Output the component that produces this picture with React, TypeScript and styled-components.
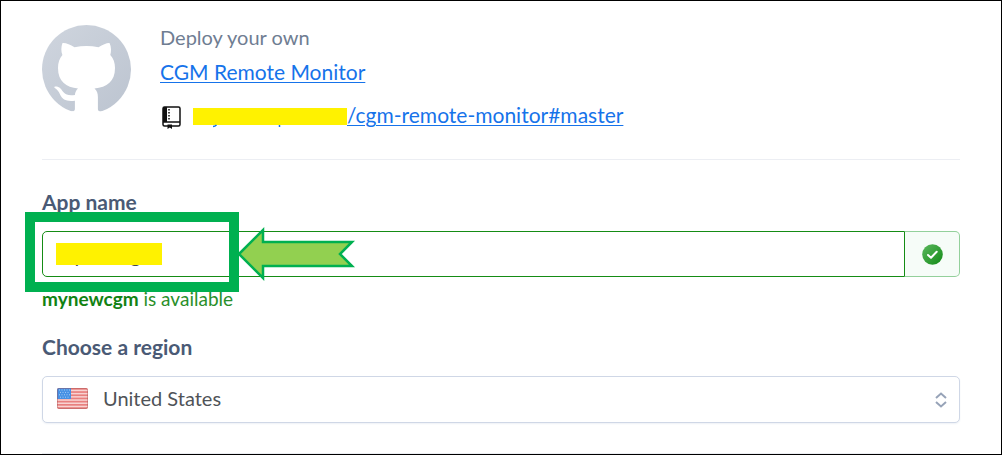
import React from "react";
import styled, { createGlobalStyle } from "styled-components";

const GlobalStyle = createGlobalStyle`
  *, *::before, *::after { box-sizing: border-box; }
  body {
    margin: 0;
    background: #fff;
    color: #596981;
    font-family: Lato, "Open Sans", sans-serif;
    font-size: 20px;
    line-height: 24px;
  }
`;

const Frame = styled.main`
  min-height: 100vh;
  border: 1px solid #000;
  padding: 24px 41px 0;
`;

const Header = styled.header`
  display: flex;
  gap: 29px;
  padding-bottom: 30px;
  border-bottom: 1px solid #eceef3;
`;

const HeaderText = styled.div`
  display: flex;
  flex-direction: column;
  align-items: flex-start;
`;

const Lead = styled.p`
  margin: 0 0 11px;
  color: #6f7d92;
`;

const Link = styled.a`
  font-size: 21px;
  color: #1673ea;
  text-decoration: underline;
  text-decoration-thickness: 1px;
  text-underline-offset: 2px;
`;

const Repo = styled.div`
  display: flex;
  align-items: center;
  margin-top: 16px;
  gap: 12px;

  & > svg { margin: 6px 0 0 2px; }
`;

const RepoLink = styled.div`
  display: flex;
  align-items: center;
`;

const Mask = styled.span<{ $width: number; $height: number }>`
  display: block;
  width: ${(p) => p.$width}px;
  height: ${(p) => p.$height}px;
  background: #fff200;
`;

const Label = styled.label`
  display: block;
  font-size: 21px;
  font-weight: 700;
  color: #4a5a75;
`;

const Field = styled.section<{ $gap: number }>`
  margin-top: ${(p) => p.$gap}px;
`;

const InputGroup = styled.div`
  position: relative;
  display: flex;
  height: 46px;
  margin-top: 17px;
`;

const TextInput = styled.input`
  flex: 1;
  min-width: 0;
  padding: 2px 14px 0;
  border: 1px solid #158c15;
  border-radius: 5px 0 0 5px;
  background: #fff;
  color: #3f4654;
  font: inherit;
  outline: none;
`;

const Status = styled.span`
  display: flex;
  align-items: center;
  justify-content: center;
  width: 55px;
  border: 1px solid #93d09b;
  border-left: 0;
  border-radius: 0 5px 5px 0;
  background: #f6fcf8;
`;

const InputMask = styled.div`
  position: absolute;
  left: 14px;
  top: 12px;
`;

const Highlight = styled.div`
  position: absolute;
  left: -17px;
  top: -19px;
  width: 214px;
  height: 80px;
  border: 10px solid #00b050;
  pointer-events: none;
`;

const Pointer = styled.svg`
  position: absolute;
  left: 194px;
  top: -8px;
  pointer-events: none;
`;

const Hint = styled.p`
  margin: 10px 0 0;
  font-size: 19px;
  color: #2a8f2a;

  strong { color: #128212; font-weight: 700; }
`;

const SelectBox = styled.div`
  position: relative;
  margin-top: 17px;
`;

const Select = styled.select`
  appearance: none;
  display: block;
  width: 100%;
  height: 47px;
  padding: 0 48px 3px 60px;
  border: 1px solid #cfd7e6;
  border-radius: 5px;
  background: #fff;
  box-shadow: 0 1px 2px #eef1f6;
  color: #4f5358;
  font: inherit;
`;

const Flag = styled.svg`
  position: absolute;
  left: 15px;
  top: 12px;
  pointer-events: none;
`;

const Chevrons = styled.svg`
  position: absolute;
  right: 13px;
  top: 16px;
  pointer-events: none;
`;

const Divider = styled.hr`
  margin: 30px 0 0;
  border: 0;
  border-top: 1px solid #eceef3;
`;

const GitHubMark = () => (
  <svg width="89" height="89" viewBox="0 0 89 89" role="img" aria-label="GitHub">
    <defs>
      <linearGradient id="mark" x1="0" y1="0" x2="1" y2="1">
        <stop offset="0" stopColor="#cfd5de" />
        <stop offset="1" stopColor="#bcc4d0" />
      </linearGradient>
    </defs>
    <circle cx="44.5" cy="44.5" r="44.5" fill="url(#mark)" />
    <path
      fill="#fff"
      d="M20.5 18C24 17.700 28 19.500 32.500 22.300Q44.500 19.600 56.500 22.300C61 19.500 65 17.700 67.500 18C69.500 22 69.300 26.500 68.300 30C71.500 33.500 73 37.500 73 43C73 56.500 65 62.300 52.500 63.400C55 65.500 55.900 68.500 55.900 72V84Q55.900 86.300 58.500 86.300V89H30V86.300Q32.900 86.300 32.900 84V75.700C24.500 76.800 20.500 74.500 18.300 70C16.500 66 15 64.300 12.500 62.800C11.300 61.500 15.500 60.700 18.500 63.500C21.500 66.500 22 71.500 32.900 70C33 67.500 34.200 65 36 63.400C24 62.300 16 56.500 16 43C16 37.500 17.500 33.500 20.400 30C19 26.500 19 22 20.500 18Z"
    />
  </svg>
);

const RepoIcon = () => (
  <svg width="19" height="23" viewBox="0 0 19 23" aria-hidden="true">
    <rect x="1" y="1" width="17" height="19" rx="1.500" fill="#fff" stroke="#111" strokeWidth="1.500" />
    <path d="M1 1H5V16H1Z" fill="#111" />
    <path d="M1 16H18" stroke="#111" strokeWidth="1.500" />
    <path d="M7 3V14" stroke="#111" strokeWidth="1.500" strokeDasharray="1.500 1.500" />
    <path d="M5.500 18.500H10V23L7.800 21.500L5.500 23Z" fill="#111" />
  </svg>
);

const RepoOwner = styled.svg`
  display: block;
  margin-top: 6px;
`;

/* Redacted owner name, with the tips of two descenders showing under the bar. */
const MaskedOwner = () => (
  <RepoOwner width="154" height="20" viewBox="0 0 154 20" role="img" aria-label="Hidden owner">
    <rect width="154" height="17" fill="#fff200" />
    <path d="M20 18.500Q22 18.500 23.500 17M86.500 17V19" fill="none" stroke="#1673ea" strokeWidth="1.500" />
  </RepoOwner>
);

const CheckIcon = () => (
  <svg width="21" height="21" viewBox="0 0 21 21" role="img" aria-label="Available">
    <defs>
      <linearGradient id="ok" x1="0" y1="0" x2="1" y2="1">
        <stop offset="0" stopColor="#5cb85f" />
        <stop offset="1" stopColor="#128a16" />
      </linearGradient>
    </defs>
    <circle cx="10.500" cy="10.500" r="10.300" fill="url(#ok)" />
    <path d="M6 11L9 13.700L14.700 7.700" fill="none" stroke="#fff" strokeWidth="2" strokeLinecap="round" strokeLinejoin="round" />
  </svg>
);

const UsFlag = () => (
  <Flag width="31" height="21" viewBox="0 0 31 21" aria-hidden="true">
    <defs>
      <clipPath id="flagShape"><rect width="31" height="21" rx="2" /></clipPath>
    </defs>
    <g clipPath="url(#flagShape)">
      <rect width="31" height="21" fill="#f8d3d2" />
      {[0, 1, 2, 3, 4, 5, 6].map((i) => (
        <rect key={i} y={i * 3.2} width="31" height="1.700" fill="#e8807f" />
      ))}
      <rect width="14" height="11" fill="#4690e4" />
      {[0, 1, 2, 3].map((r) => (
        <path key={r} d={`M${r % 2 ? 3 : 2} ${2 + r * 2.4}H13`} stroke="#a9cdf5" strokeWidth="1" strokeDasharray="1 1.500" />
      ))}
      <rect x="0.500" y="0.500" width="30" height="20" rx="1.500" fill="none" stroke="#a04a4a" strokeOpacity="0.400" />
    </g>
  </Flag>
);

export default function App() {
  return (
    <>
      <GlobalStyle />
      <Frame>
        <Header>
          <GitHubMark />
          <HeaderText>
            <Lead>Deploy your own</Lead>
            <Link href="#app">CGM Remote Monitor</Link>
            <Repo>
              <RepoIcon />
              <RepoLink>
                <MaskedOwner />
                <Link href="#repo">/cgm-remote-monitor#master</Link>
              </RepoLink>
            </Repo>
          </HeaderText>
        </Header>

        <Field $gap={30}>
          <Label htmlFor="app-name">App name</Label>
          <InputGroup>
            <TextInput id="app-name" defaultValue="mynewcgm" aria-describedby="app-hint" />
            <Status><CheckIcon /></Status>
            <InputMask><Mask $width={106} $height={22} /></InputMask>
            <Pointer width="120" height="60" viewBox="0 0 120 60" aria-hidden="true">
              <path
                d="M3 31L27 7V19H116L104 31L116 43H27V55Z"
                fill="#92d050"
                stroke="#00b050"
                strokeWidth="2.500"
              />
            </Pointer>
            <Highlight />
          </InputGroup>
          <Hint id="app-hint"><strong>mynewcgm</strong> is available</Hint>
        </Field>

        <Field $gap={24}>
          <Label htmlFor="region">Choose a region</Label>
          <SelectBox>
            <Select id="region" defaultValue="us">
              <option value="us">United States</option>
              <option value="eu">Europe</option>
            </Select>
            <UsFlag />
            <Chevrons width="12" height="16" viewBox="0 0 12 16" fill="none" stroke="#97a3b8" strokeWidth="2" aria-hidden="true">
              <path d="M1 6L6 1.500L11 6M1 10L6 14.500L11 10" />
            </Chevrons>
          </SelectBox>
        </Field>
        <Divider />
      </Frame>
    </>
  );
}
